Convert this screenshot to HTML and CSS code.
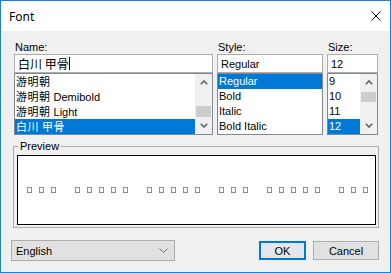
FILE: index.html
```html
<!DOCTYPE html>
<html lang="en">
  <head>
    <meta charset="UTF-8">
    <title>Font</title>
    <link rel="stylesheet" href="styles.css">
  </head>
  <body>
    <div class="window">
      <div class="titlebar">
        <span class="title">Font</span>
        <svg class="close" width="10" height="10" viewBox="0 0 10 10"><path d="M0.5 0.5L9.5 9.5M9.5 0.5L0.5 9.5" stroke="#000" stroke-width="1"/></svg>
      </div>
      <div class="content">
        <div class="fields">
          <div class="field name-field">
            <label>Name:</label>
            <div class="edit"><span class="jp">白川 甲骨</span><span class="caret"></span></div>
            <div class="list">
              <ul class="items">
                <li><span class="jp">游明朝</span></li>
                <li><span class="jp">游明朝</span> Demibold</li>
                <li><span class="jp">游明朝</span> Light</li>
                <li class="sel"><span class="jp">白川 甲骨</span></li>
              </ul>
              <div class="scrollbar">
                <div class="arrow"><svg width="8" height="5" viewBox="0 0 8 5"><polyline points="0.8,4.2 4,1 7.2,4.2" fill="none" stroke="#606060" stroke-width="1.6"/></svg></div>
                <div class="track end"><div class="thumb"></div></div>
                <div class="arrow"><svg width="8" height="5" viewBox="0 0 8 5"><polyline points="0.8,0.8 4,4 7.2,0.8" fill="none" stroke="#606060" stroke-width="1.6"/></svg></div>
              </div>
            </div>
          </div>
          <div class="field style-field">
            <label>Style:</label>
            <div class="edit">Regular</div>
            <div class="list">
              <ul class="items">
                <li class="sel">Regular</li>
                <li>Bold</li>
                <li>Italic</li>
                <li>Bold Italic</li>
              </ul>
            </div>
          </div>
          <div class="field size-field">
            <label>Size:</label>
            <div class="edit">12</div>
            <div class="list">
              <ul class="items">
                <li>9</li>
                <li>10</li>
                <li>11</li>
                <li class="sel">12</li>
              </ul>
              <div class="scrollbar">
                <div class="arrow"><svg width="8" height="5" viewBox="0 0 8 5"><polyline points="0.8,4.2 4,1 7.2,4.2" fill="none" stroke="#606060" stroke-width="1.6"/></svg></div>
                <div class="track"><div class="thumb small"></div></div>
                <div class="arrow"><svg width="8" height="5" viewBox="0 0 8 5"><polyline points="0.8,0.8 4,4 7.2,0.8" fill="none" stroke="#606060" stroke-width="1.6"/></svg></div>
              </div>
            </div>
          </div>
        </div>

        <fieldset class="preview">
          <legend>Preview</legend>
          <div class="sample">
            <span class="t"></span><span class="t"></span><span class="t"></span><span class="sp"></span>
            <span class="t"></span><span class="t"></span><span class="t"></span><span class="t"></span><span class="t"></span><span class="sp"></span>
            <span class="t"></span><span class="t"></span><span class="t"></span><span class="t"></span><span class="t"></span><span class="sp"></span>
            <span class="t"></span><span class="t"></span><span class="t"></span><span class="sp"></span>
            <span class="t"></span><span class="t"></span><span class="t"></span><span class="t"></span><span class="t"></span><span class="sp"></span>
            <span class="t"></span><span class="t"></span><span class="t"></span>
          </div>
        </fieldset>

        <div class="actions">
          <div class="combo">
            <span>English</span>
            <svg width="9" height="5" viewBox="0 0 9 5"><polyline points="0.5,0.5 4.5,4.5 8.5,0.5" fill="none" stroke="#707070" stroke-width="1"/></svg>
          </div>
          <div class="buttons">
            <button class="btn btn-ok">OK</button>
            <button class="btn btn-cancel">Cancel</button>
          </div>
        </div>
      </div>
    </div>
  </body>
</html>
```

FILE: styles.css
```css
*{
margin:0;
padding:0;
box-sizing:border-box;
}

body{
    width:391px;
    height:273px;
    overflow:hidden;
    font-family:"Liberation Sans", "Noto Sans CJK JP", sans-serif;
    font-size:11px;
    color:#000;
}

.window{
    width:391px;
    height:273px;
    border:1px solid #1a82d6;
    background-color:#f0f0f0;
    display:flex;
    flex-direction:column;
}

.titlebar{
    height:30px;
    background-color:#fff;
    display:flex;
    align-items:center;
    justify-content:space-between;
    padding:0 9px 0 8px;
}

.title{
    font-family:"Noto Sans", sans-serif;
    font-size:12px;
}

.content{
    padding:10px 11px 0 10px;
}

.jp{
    font-family:"Noto Sans CJK JP", sans-serif;
    font-size:12px;
}

.items .jp{
    font-size:11px;
    letter-spacing:0.5px;
}

/* name / style / size columns */
.fields{
    display:flex;
    gap:4px;
    margin-left:3px;
}

.field label{
    display:block;
    line-height:13px;
    padding-left:1px;
}

.name-field{
    width:199px;
}

.style-field{
    width:106px;
}

.size-field{
    width:51px;
}

.edit{
    height:19px;
    border:1px solid #adadad;
    background-color:#fff;
    display:flex;
    align-items:center;
    padding-left:3px;
    white-space:nowrap;
}

.caret{
    width:1px;
    height:13px;
    background-color:#000;
}

.list{
    height:62px;
    border:1px solid #828790;
    background-color:#fff;
    display:flex;
}

.items{
    list-style:none;
    flex:1;
    overflow:hidden;
}

.items li{
    height:15px;
    line-height:15px;
    padding-left:1px;
    white-space:nowrap;
    overflow:hidden;
}

.items .sel{
    background-color:#0078d7;
    color:#fff;
}

.scrollbar{
    width:17px;
    background-color:#f0f0f0;
    display:flex;
    flex-direction:column;
}

.arrow{
    height:17px;
    display:flex;
    align-items:center;
    justify-content:center;
}

.track{
    flex:1;
    display:flex;
    flex-direction:column;
    padding-top:1px;
}

.track.end{
    justify-content:flex-end;
    padding-top:0;
}

.thumb{
    height:11px;
    margin:0 1px;
    background-color:#cdcdcd;
}

.thumb.small{
    height:10px;
}

/* preview group */
.preview{
    margin:5px 0 0 2px;
    border:1px solid #adadad;
    padding:2px 2px 2px 3px;
}

.preview legend{
    margin-left:1px;
    padding:0 2px;
    line-height:13px;
}

.sample{
    height:70px;
    border:1px solid #000;
    background-color:#fff;
    display:flex;
    align-items:center;
    justify-content:center;
}

.sample .t{
    width:5px;
    height:6px;
    margin:0 3px 0 4px;
    border:1px solid #8c8c8c;
    border-left-color:#b08a70;
    border-right-color:#6a9ad0;
}

.sample .sp{
    width:12px;
}

/* bottom row */
.actions{
    display:flex;
    align-items:center;
    margin-top:12px;
}

.combo{
    width:164px;
    height:21px;
    border:1px solid #adadad;
    background-color:#e1e1e1;
    display:flex;
    align-items:center;
    justify-content:space-between;
    padding:0 6px 0 4px;
}

.buttons{
    margin-left:auto;
    display:flex;
    gap:7px;
}

.btn{
    height:19px;
    border:1px solid #adadad;
    background-color:#e1e1e1;
    font-family:"Liberation Sans", sans-serif;
    font-size:11px;
    color:#000;
}

.btn-ok{
    width:47px;
    border-color:#0078d7;
    box-shadow:inset 0 0 0 1px #0078d7;
    background-color:#e3e6ea;
}

.btn-cancel{
    width:66px;
}
```
